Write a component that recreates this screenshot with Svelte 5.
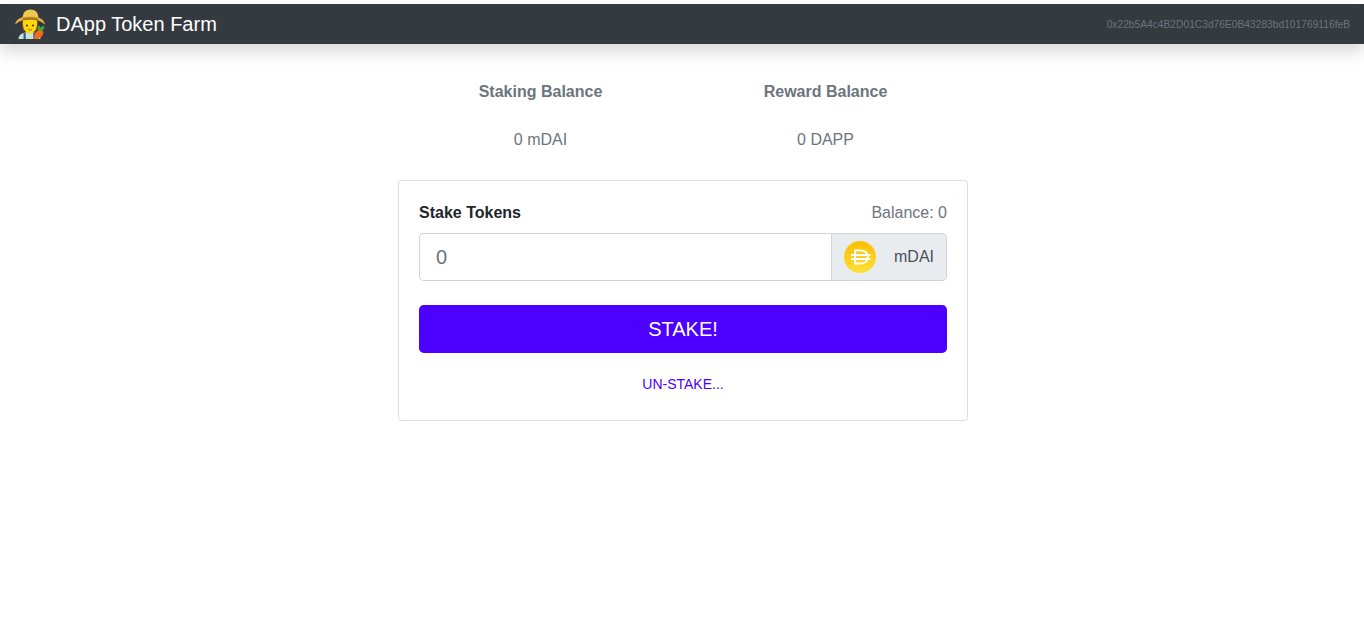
<script>
  let amount = $state('');
  const account = '0x22b5A4c4B2D01C3d76E0B43283bd101769116feB';
  const balances = [
    { label: 'Staking Balance', value: '0 mDAI' },
    { label: 'Reward Balance', value: '0 DAPP' }
  ];
</script>

<nav class="navbar">
  <a class="brand" href="#top">
    <svg class="farmer" width="30" height="30" viewBox="0 0 30 30" aria-hidden="true">
      <!-- shirt and overalls -->
      <path d="M3.500 30.500c0-5 4-7.500 11-7.500s11 2.500 11 7.500z" fill="#c3e6d8" />
      <path d="M8.500 24v6.500h2.200v-7zM18.300 23.500v7h2.200V24z" fill="#4f4f86" />
      <!-- hair and face -->
      <path d="M6.800 12.500c0 3 .4 7 1.200 9.500h14c.8-2.500 1.200-6.500 1.200-9.500z" fill="#7a4f1a" />
      <path d="M8 12c0-1 2-3 7-3s7 2 7 3c.5 5-1 12.500-7 12.500S7.500 17 8 12z" fill="#fdd90a" />
      <circle cx="12" cy="16.500" r="1.100" fill="#4a3a10" />
      <circle cx="18" cy="16.500" r="1.100" fill="#4a3a10" />
      <path d="M13 20.500c1 .8 3 .8 4 0" fill="none" stroke="#a8660c" stroke-width=".9" />
      <!-- straw hat -->
      <path d="M7.500 10.500C7.500 4 10 .5 15.500.5S23.500 4 23.500 10.500z" fill="#efc850" />
      <path d="M0 15.500C1 10 6 7.500 15 7.500s14 2.500 15 8c-2.500-1.500-4.500-3.500-8-4.200-4-.7-10-.7-14 0-3.500.7-5.500 2.700-8 4.200z" fill="#e2b43a" />
      <path d="M8 9c4-.9 10-.9 14.500 0l.7 2.300c-5-.9-10-.9-15.800 0z" fill="#a9761c" />
      <!-- carrot -->
      <path d="M22.500 22c.6-2.500.3-4 .8-5.500 1.400.4 2 1.200 2.300 2.300.7-1.100 1.900-1.700 3.900-1.800-.2 2.200-1 3.800-2.500 5z" fill="#43a83c" />
      <path d="M21.500 22.800c1.700-1.700 4.700-1.900 6.800-.2.500 2.700-1.700 6-5.300 7.400h-3.800c-.5-2.500.5-5.200 2.300-7.200z" fill="#f26a18" />
    </svg>
    <span>DApp Token Farm</span>
  </a>
  <small class="account">{account}</small>
</nav>

<main class="content">
  <div class="balances">
    {#each balances as b}
      <div class="balance">
        <div class="cell label">{b.label}</div>
        <div class="cell">{b.value}</div>
      </div>
    {/each}
  </div>

  <div class="card">
    <div class="card-head">
      <b>Stake Tokens</b>
      <span class="muted">Balance: 0</span>
    </div>
    <div class="input-group">
      <input type="text" placeholder="0" bind:value={amount} />
      <div class="append">
        <svg width="32" height="32" viewBox="0 0 32 32" aria-hidden="true">
          <defs>
            <linearGradient id="dai" x1="0" y1="0" x2="0" y2="1">
              <stop offset="0" stop-color="#fbbd00" />
              <stop offset="1" stop-color="#fde036" />
            </linearGradient>
          </defs>
          <circle cx="16" cy="16" r="16" fill="url(#dai)" />
          <path d="M11 9.500h5.800c4.200 0 7 2.500 7 6.500s-2.800 6.500-7 6.500h-5.800z" fill="none" stroke="#fff" stroke-width="2" />
          <path d="M7 14h19.500M7 18h19.500" stroke="#fff" stroke-width="1.800" />
        </svg>
        <span>mDAI</span>
      </div>
    </div>
    <button class="stake">STAKE!</button>
    <button class="unstake">UN-STAKE...</button>
  </div>
</main>

<style>
  :global(body) {
    margin: 0;
    background: #fff;
    font-family: "Liberation Sans", Arial, sans-serif;
    font-size: 16px;
    line-height: 1.5;
    color: #212529;
  }

  .navbar {
    display: flex;
    align-items: center;
    justify-content: space-between;
    height: 40px;
    margin-top: 4px;
    padding: 0 14px 0 15px;
    background: #343a40;
    box-shadow: 0 8px 16px rgba(0, 0, 0, 0.15);
  }

  .brand {
    display: flex;
    align-items: center;
    gap: 11px;
    color: #fff;
    font-size: 20px;
    text-decoration: none;
  }

  .farmer {
    flex-shrink: 0;
  }

  .account {
    margin-top: 2px;
    font-size: 10.240px;
    color: #6c757d;
  }

  .content {
    width: 570px;
    margin: 24px auto 0;
    padding-left: 2px;
  }

  .balances {
    display: grid;
    grid-template-columns: 1fr 1fr;
    margin-bottom: 16px;
    color: #6c757d;
    text-align: center;
  }

  .cell {
    padding: 12px;
  }

  .label {
    font-weight: 700;
  }

  .card {
    display: flex;
    flex-direction: column;
    padding: 20px;
    background: #fff;
    border: 1px solid rgba(0, 0, 0, 0.125);
    border-radius: 4px;
  }

  .card-head {
    display: flex;
    justify-content: space-between;
    margin-bottom: 8px;
  }

  .muted {
    color: #6c757d;
  }

  .input-group {
    display: flex;
    height: 48px;
    margin-bottom: 24px;
  }

  input {
    flex: 1;
    min-width: 0;
    box-sizing: border-box;
    padding: 8px 16px;
    font: inherit;
    font-size: 20px;
    color: #495057;
    border: 1px solid #ced4da;
    border-right: 0;
    border-radius: 4.800px 0 0 4.800px;
    outline: none;
  }

  input::placeholder {
    color: #6c757d;
  }

  .append {
    display: flex;
    align-items: center;
    gap: 18px;
    box-sizing: border-box;
    width: 116px;
    padding: 0 12px;
    color: #495057;
    background: #e9ecef;
    border: 1px solid #ced4da;
    border-radius: 0 4.800px 4.800px 0;
  }

  button {
    font-family: inherit;
    cursor: pointer;
    border: 0;
  }

  .stake {
    height: 48px;
    font-size: 20px;
    color: #fff;
    background: #4c00ff;
    border-radius: 4.800px;
  }

  .unstake {
    margin-top: 16px;
    padding: 4px 8px;
    font-size: 14px;
    line-height: 1.5;
    color: #4c00ff;
    background: none;
    border: 1px solid transparent;
  }
</style>
